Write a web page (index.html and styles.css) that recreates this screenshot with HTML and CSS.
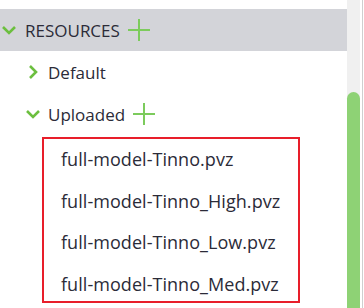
FILE: index.html
```html
<!DOCTYPE html>
<html lang="en">
<head>
  <meta charset="UTF-8" />
  <title>Resources</title>
  <link rel="stylesheet" href="styles.css">
</head>
<body>

<div class="panel">
  <div class="tree">
    <div class="section">
      <svg class="chev" width="16" height="16" viewBox="0 0 16 16"><path d="M2 5 L8 11 L14 5" /></svg>
      <span class="section-title">RESOURCES</span>
      <svg class="plus" width="24" height="24" viewBox="0 0 24 24"><path d="M12 1 V23 M1 12 H23" /></svg>
    </div>

    <div class="node">
      <svg class="chev" width="16" height="16" viewBox="0 0 16 16"><path d="M5 2 L11 8 L5 14" /></svg>
      <span>Default</span>
    </div>

    <div class="node">
      <svg class="chev" width="16" height="16" viewBox="0 0 16 16"><path d="M2 5 L8 11 L14 5" /></svg>
      <span>Uploaded</span>
      <svg class="plus" width="24" height="24" viewBox="0 0 24 24"><path d="M12 1 V23 M1 12 H23" /></svg>
    </div>

    <ul class="files">
      <li>full-model-Tinno.pvz</li>
      <li>full-model-Tinno_High.pvz</li>
      <li>full-model-Tinno_Low.pvz</li>
      <li>full-model-Tinno_Med.pvz</li>
    </ul>
  </div>
  <div class="scroll"><div class="thumb"></div></div>
</div>

</body>
</html>
```

FILE: styles.css
```css
body {
  margin: 0;
  font-family: 'Open Sans', 'Noto Sans', sans-serif;
  color: #2b2b38;
  background: #fff;
  overflow: hidden;
}
.panel {
  display: flex;
  height: 308px;
  width: 362px;
  border-right: 1px solid #cfcfcf;
  overflow: hidden;
}
.tree {
  flex: 1;
  padding-top: 9px;
}
.section {
  display: flex;
  align-items: center;
  height: 42px;
  background: #d3d4d9;
  padding-left: 1px;
  font-size: 17px;
}
.section-title {
  margin-left: 8px;
}
.chev path {
  fill: none;
  stroke: #6cbf3f;
  stroke-width: 2.6;
}
.plus {
  margin-left: 7px;
}
.plus path {
  fill: none;
  stroke: #7ccb5c;
  stroke-width: 2;
}
.node {
  display: flex;
  align-items: center;
  height: 42px;
  font-size: 17px;
  padding-left: 25px;
}
.node span {
  margin-left: 7px;
}
.node .plus {
  margin-left: 7px;
}
.files {
  list-style: none;
  margin: 2px 0 0 42px;
  padding: 0;
  width: 254px;
  height: 162px;
  border: 2px solid #e81e2a;
}
.files li {
  height: 41.5px;
  line-height: 41.5px;
  padding-left: 17px;
  font-size: 18px;
  letter-spacing: 0.05px;
  white-space: nowrap;
}
.scroll {
  width: 13px;
  background: #f0f0f0;
  margin-right: 2px;
  padding-top: 92px;
}
.thumb {
  height: 240px;
  background: #8ed275;
  border-radius: 7px 7px 0 0;
}
```
